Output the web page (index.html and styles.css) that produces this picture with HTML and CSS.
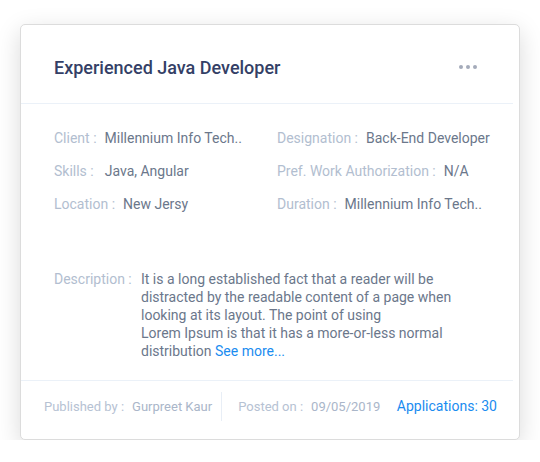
FILE: index.html
```html
<!DOCTYPE html>
<html lang="en">
<head>
<meta charset="utf-8">
<title>Job card</title>
<link rel="stylesheet" href="styles.css">
</head>
<body>
<div class="card">
  <div class="card-header">
    <h2 class="title">Experienced Java Developer</h2>
    <button class="more" aria-label="More options"><span></span><span></span><span></span></button>
  </div>
  <div class="card-body">
    <div class="details">
      <div class="item"><span class="label">Client :</span><span class="value">Millennium Info Tech..</span></div>
      <div class="item"><span class="label">Designation :</span><span class="value">Back-End Developer</span></div>
      <div class="item"><span class="label label-wide">Skills :</span><span class="value">Java, Angular</span></div>
      <div class="item"><span class="label">Pref. Work Authorization :</span><span class="value">N/A</span></div>
      <div class="item"><span class="label">Location :</span><span class="value">New Jersy</span></div>
      <div class="item"><span class="label">Duration :</span><span class="value">Millennium Info Tech..</span></div>
    </div>
    <div class="description">
      <span class="label desc-label">Description :</span>
      <p class="desc-text">It is a long established fact that a reader will be distracted by the readable content of a page when looking at its layout. The point of using<br>Lorem Ipsum is that it has a more-or-less normal distribution <a class="see-more" href="#">See more...</a></p>
    </div>
  </div>
  <div class="card-footer">
    <div class="meta meta-published"><span class="meta-label">Published by :</span><span class="meta-value">Gurpreet Kaur</span></div>
    <div class="meta meta-posted"><span class="meta-label">Posted on :</span><span class="meta-value">09/05/2019</span></div>
    <a class="applications" href="#">Applications: 30</a>
  </div>
</div>
</body>
</html>
```
FILE: styles.css
```css
* { box-sizing: border-box; }
html, body { margin: 0; padding: 0; background: #ffffff; }
body {
  font-family: Roboto, "Liberation Sans", Arial, sans-serif;
  padding: 24px 0 0 20px;
}
.card {
  width: 500px;
  height: 416px;
  background: #ffffff;
  border: 1px solid #dcdcdc;
  border-radius: 5px;
  box-shadow: 0 7px 24px rgba(0, 0, 0, 0.15);
}
.card-header {
  display: flex;
  align-items: center;
  justify-content: space-between;
  margin-right: 6px;
  padding: 31px 36px 23px 33px;
  border-bottom: 1px solid #ebf1f8;
}
.title {
  margin: 0;
  font-size: 18px;
  line-height: 24px;
  font-weight: 500;
  color: #343f66;
}
.more {
  display: flex;
  gap: 3px;
  padding: 0;
  margin: 0 0 2px 0;
  border: 0;
  background: none;
}
.more span {
  width: 4px;
  height: 4px;
  border-radius: 50%;
  background: #a4abba;
}
.card-body {
  padding: 24px 20px 20px 33px;
}
.details {
  display: grid;
  grid-template-columns: 223px auto;
  row-gap: 13px;
}
.item {
  font-size: 14px;
  line-height: 20px;
  white-space: nowrap;
}
.label {
  color: #b2bed0;
  margin-right: 8px;
}
.label-wide {
  margin-right: 11px;
}
.value {
  color: #6b778b;
}
.description {
  display: flex;
  margin-top: 55px;
  font-size: 14px;
  line-height: 18px;
}
.desc-label {
  flex: none;
  width: 87px;
  margin-right: 0;
  padding-top: 1px;
}
.desc-text {
  margin: 0;
  padding-top: 1px;
  width: 350px;
  color: #6b778b;
}
.see-more {
  color: #1a8cf0;
  text-decoration: none;
}
.card-footer {
  display: flex;
  align-items: flex-start;
  margin-right: 6px;
  padding: 11px 15px 19px 23px;
  border-top: 1px solid #ebf1f8;
}
.meta {
  font-size: 13px;
  line-height: 29px;
  height: 29px;
  white-space: nowrap;
}
.meta-label {
  color: #b6c2d3;
  margin-right: 8px;
}
.meta-value {
  color: #aab6c9;
}
.meta-published {
  padding-right: 9px;
  border-right: 1px solid #e8eef6;
}
.meta-posted {
  padding-left: 16px;
}
.applications {
  margin-left: auto;
  margin-right: 1px;
  font-size: 14px;
  line-height: 28px;
  color: #1a8cf0;
  text-decoration: none;
}
```
